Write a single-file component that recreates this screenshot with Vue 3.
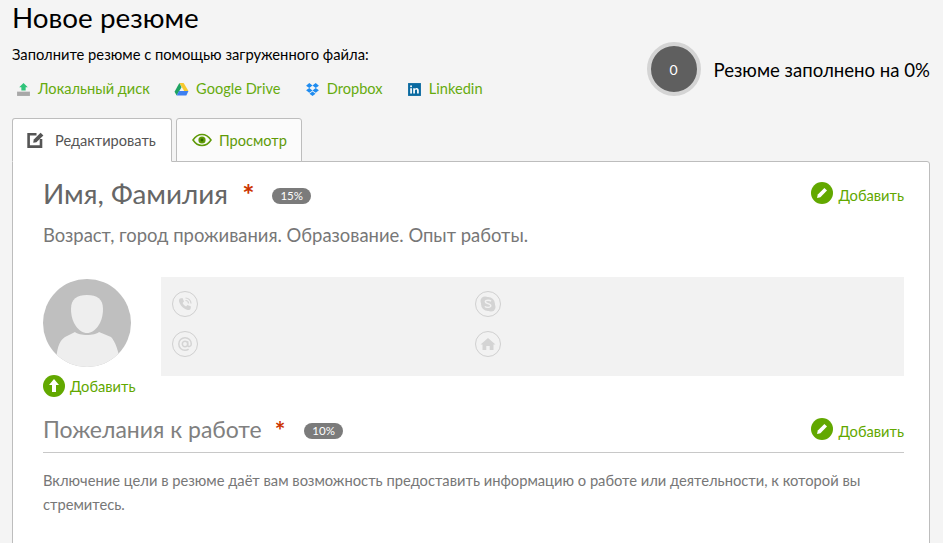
<script setup>
const sources = [
  { name: 'Локальный диск', icon: 'disk' },
  { name: 'Google Drive', icon: 'drive' },
  { name: 'Dropbox', icon: 'dropbox' },
  { name: 'Linkedin', icon: 'linkedin' }
]
</script>

<template>
  <div class="page">
    <header class="head">
      <div class="head-left">
        <h1 class="title">Новое резюме</h1>
        <p class="lead">Заполните резюме с помощью загруженного файла:</p>
        <div class="sources">
          <a v-for="s in sources" :key="s.name" class="source">
            <svg class="source-icon" width="15" height="15" viewBox="0 0 14 14">
              <template v-if="s.icon === 'disk'">
                <path d="M7 1 L11 5 H9 V8 H5 V5 H3 Z" fill="#2fc47a" />
                <rect x="1" y="9" width="12" height="4" fill="#a8a8a8" />
              </template>
              <template v-else-if="s.icon === 'drive'">
                <path d="M5 1 H9 L13.5 8.5 H9.5 Z" fill="#f7c92e" />
                <path d="M5 1 L0.5 9 L2.5 12.5 L7 5 Z" fill="#1ea362" />
                <path d="M2.5 12.5 H11.5 L13.5 8.5 H4.7 Z" fill="#3d7ff0" />
              </template>
              <template v-else-if="s.icon === 'dropbox'">
                <path d="M4 1 L7 3.2 L4 5.6 L1 3.4 Z M10 1 L13 3.4 L10 5.6 L7 3.2 Z M4 5.6 L7 7.9 L4 10 L1 7.8 Z M10 5.6 L13 7.8 L10 10 L7 7.9 Z M4.2 10.9 L7 8.9 L9.8 10.9 L7 13 Z" fill="#1f8cf0" />
              </template>
              <template v-else>
                <rect x="1" y="1" width="12" height="12" fill="#0a6aa0" />
                <rect x="3" y="5.8" width="1.6" height="5" fill="#fff" />
                <rect x="3" y="3.2" width="1.6" height="1.6" fill="#fff" />
                <path d="M5.8 5.8 H7.3 V6.6 C7.7 6 8.3 5.7 9 5.7 C10.3 5.7 11 6.5 11 8 V10.8 H9.4 V8.3 C9.4 7.5 9.1 7.1 8.5 7.1 C7.8 7.1 7.4 7.6 7.4 8.4 V10.8 H5.8 Z" fill="#fff" />
              </template>
            </svg>
            <span>{{ s.name }}</span>
          </a>
        </div>
      </div>
      <div class="progress">
        <div class="ring"><span>0</span></div>
        <span class="progress-text">Резюме заполнено на 0%</span>
      </div>
    </header>

    <nav class="tabs">
      <div class="tab tab-active">
        <svg width="18" height="18" viewBox="0 0 18 18" class="tab-icon">
          <path d="M9.5 3.2 H1.6 V15.6 H14 V8" fill="none" stroke="#555" stroke-width="2.6" />
          <path d="M6.2 11.8 L6.8 8.6 L13.6 1.8 L16.4 4.4 L9.4 11.2 Z" fill="#555" />
        </svg>
        <span>Редактировать</span>
      </div>
      <div class="tab tab-view">
        <svg width="20" height="14" viewBox="0 0 20 14" class="tab-icon">
          <path d="M1 7 C4 2.5 7 1.5 10 1.5 C13 1.5 16 2.5 19 7 C16 11.5 13 12.5 10 12.5 C7 12.5 4 11.5 1 7 Z" fill="none" stroke="#5f9a08" stroke-width="1.5" />
          <circle cx="10" cy="7" r="3.6" fill="#5f9a08" />
          <circle cx="10" cy="7" r="1.4" fill="#2f6a00" />
        </svg>
        <span>Просмотр</span>
      </div>
    </nav>

    <main class="panel">
      <section class="name-row">
        <h2 class="name">Имя, Фамилия</h2>
        <span class="star star-big">*</span>
        <span class="badge">15%</span>
        <a class="add add-right">
          <svg width="22" height="22" viewBox="0 0 22 22">
            <circle cx="11" cy="11" r="11" fill="#62a800" />
            <path d="M6 16 L6.8 12.6 L13.4 6 L16 8.6 L9.4 15.2 Z" fill="#fff" />
          </svg>
          <span>Добавить</span>
        </a>
      </section>
      <p class="sub">Возраст, город проживания. Образование. Опыт работы.</p>

      <section class="person">
        <div class="photo-col">
          <svg class="avatar" width="88" height="88" viewBox="0 0 88 88">
            <defs><clipPath id="av"><circle cx="44" cy="44" r="44" /></clipPath></defs>
            <circle cx="44" cy="44" r="44" fill="#bfbfbf" />
            <g clip-path="url(#av)">
              <path d="M13 88 C13 70 16 62 22 58 L32 53 C36 57 52 57 56 53 L68 58 C72 62 76 72 78 88 Z" fill="#eeeeee" />
              <path d="M28 30 C28 20 34 16 44 16 C54 16 60 20 60 30 C60 44 52 54 44 54 C36 54 28 44 28 30 Z" fill="#eeeeee" />
            </g>
          </svg>
          <a class="add add-photo">
            <svg width="22" height="22" viewBox="0 0 22 22">
              <circle cx="11" cy="11" r="11" fill="#62a800" />
              <path d="M11 4 L16 10 H13 V17 H9 V10 H6 Z" fill="#fff" />
            </svg>
            <span>Добавить</span>
          </a>
        </div>
        <div class="contacts">
          <span class="contact">
            <svg width="16" height="16" viewBox="0 0 16 16">
              <path d="M3 2.5 L5.5 2 L7 5.5 L5.6 7 C6.2 8.4 7.6 9.8 9 10.4 L10.5 9 L14 10.5 L13.5 13 C13 14 11.5 14.3 10 13.8 C6.5 12.7 3.3 9.5 2.2 6 C1.7 4.5 2 3 3 2.5 Z" fill="#d4d4d4" />
              <path d="M8.5 2 C11.5 2 14 4.5 14 7.5 M8.5 4.5 C10.2 4.5 11.5 5.8 11.5 7.5" fill="none" stroke="#d4d4d4" stroke-width="1.2" />
            </svg>
          </span>
          <span class="contact">
            <svg width="18" height="18" viewBox="0 0 18 18">
              <circle cx="6" cy="6" r="4.5" fill="#d4d4d4" />
              <circle cx="12" cy="12" r="4.5" fill="#d4d4d4" />
              <circle cx="9" cy="9" r="7" fill="#d4d4d4" />
              <path d="M12 6.3 C11 5 6.5 4.8 6.3 6.8 C6.1 8.9 11.9 8.4 11.8 10.8 C11.7 12.8 7 12.8 5.9 11.4" fill="none" stroke="#f2f2f2" stroke-width="1.4" />
            </svg>
          </span>
          <span class="contact">
            <svg width="16" height="16" viewBox="0 0 16 16">
              <circle cx="8" cy="8" r="2.7" fill="none" stroke="#d4d4d4" stroke-width="1.5" />
              <path d="M10.7 5.3 V9.3 C10.7 11.2 14.3 11 14.3 8 C14.3 4.5 11.5 1.8 8 1.8 C4.5 1.8 1.8 4.5 1.8 8 C1.8 11.5 4.5 14.2 8 14.2 C9.4 14.2 10.6 13.8 11.6 13.1" fill="none" stroke="#d4d4d4" stroke-width="1.5" />
            </svg>
          </span>
          <span class="contact">
            <svg width="16" height="16" viewBox="0 0 16 16">
              <path d="M8 2 L15.5 8.5 H13.5 V14 H9.7 V10 H6.3 V14 H2.5 V8.5 H0.5 Z" fill="#d4d4d4" />
            </svg>
          </span>
        </div>
      </section>

      <section class="wish-row">
        <h3 class="wish">Пожелания к работе</h3>
        <span class="star star-small">*</span>
        <span class="badge">10%</span>
        <a class="add add-right">
          <svg width="22" height="22" viewBox="0 0 22 22">
            <circle cx="11" cy="11" r="11" fill="#62a800" />
            <path d="M6 16 L6.8 12.6 L13.4 6 L16 8.6 L9.4 15.2 Z" fill="#fff" />
          </svg>
          <span>Добавить</span>
        </a>
      </section>
      <p class="wish-text">Включение цели в резюме даёт вам возможность предоставить информацию о работе или деятельности, к которой вы стремитесь.</p>
    </main>
  </div>
</template>

<style>
html, body { margin: 0; background: #f4f4f4; overflow: hidden; }
</style>

<style scoped>
.page {
  height: 543px;
  overflow: hidden;
  box-sizing: border-box;
  padding: 0 13px 0 12px;
  font-family: Lato, "Open Sans", sans-serif;
  background: #f4f4f4;
}
.head { display: flex; justify-content: space-between; height: 118px; }
.title { margin: 2px 0 0; font-size: 27.8px; line-height: 32px; font-weight: 400; color: #000; }
.lead { margin: 12px 0 0; font-size: 14.72px; line-height: 17px; color: #000; }
.sources { display: flex; gap: 24.3px; margin-top: 17px; padding-left: 4px; }
.source { display: flex; align-items: center; gap: 7px; font-size: 14.6px; line-height: 18px; color: #66ab0e; }
.progress { display: flex; align-items: flex-start; margin-top: 42px; gap: 13px; }
.ring {
  box-sizing: border-box; width: 54px; height: 54px; border-radius: 50%;
  background: #5f5f5f; border: 4.5px solid #d4d4d4;
  display: flex; align-items: center; justify-content: center;
  color: #fff; font-size: 14px;
}
.progress-text { font-size: 18.6px; line-height: 56px; color: #000; }
.tabs { display: flex; gap: 4px; height: 44px; margin-bottom: -1px; position: relative; z-index: 1; }
.tab {
  box-sizing: border-box; height: 44px;
  border: 1px solid #bdbdbd; border-radius: 3px 3px 0 0;
  display: flex; align-items: center; font-size: 14.6px;
}
.tab-active { width: 160px; background: #fff; border-bottom-color: #fff; color: #555; padding-left: 14px; gap: 10px; }
.tab-view { width: 126px; background: #fbfbfb; color: #5f9a08; padding-left: 15px; gap: 7px; }
.tab-icon { flex: none; }
.panel {
  box-sizing: border-box; height: 400px;
  background: #fff; border: 1px solid #bdbdbd; border-radius: 0 3px 0 0;
  padding: 0 25px 0 30px;
}
.name-row { display: flex; align-items: center; height: 61px; }
.name { margin: 0; font-size: 27.9px; font-weight: 400; color: #666; }
.star { color: #cc3300; line-height: 1; font-weight: 700; }
.star-big { font-size: 29px; margin-left: 14px; margin-top: 1px; }
.badge {
  background: #7b7b7b; color: #fff; font-size: 11.5px; line-height: 16px;
  padding: 0 8px; border-radius: 8px;
}
.name-row .badge { margin-left: 18px; margin-top: 7px; }
.add { display: flex; align-items: center; gap: 5px; font-size: 14.7px; color: #62a800; }
.add-right { margin-left: auto; }
.add-right span { padding-top: 4px; }
.sub { margin: 0; font-size: 18.45px; line-height: 24px; color: #777; }
.person { display: flex; margin-top: 30px; height: 129px; }
.photo-col { width: 118px; flex: none; padding-top: 2px; }
.avatar { display: block; }
.add-photo { margin-top: 8px; }
.contacts {
  flex: 1; background: #f2f2f2; height: 99px; box-sizing: border-box;
  display: grid; grid-template-columns: 303px 1fr; grid-auto-rows: 40px;
  padding: 14px 11px 0;
}
.contact {
  width: 26px; height: 26px; box-sizing: border-box;
  border: 1px solid #d0d0d0; border-radius: 50%;
  display: flex; align-items: center; justify-content: center;
}
.wish-row {
  display: flex; align-items: center; height: 46px;
  border-bottom: 1px solid #c8c8c8;
}
.wish { margin: 0; font-size: 23px; font-weight: 400; color: #808080; }
.star-small { font-size: 25px; margin-left: 13px; margin-top: 2px; }
.wish-row .badge { margin-left: 19px; margin-top: 3px; }
.wish-text { margin: 15px 0 0; font-size: 14.72px; line-height: 24px; color: #777; }
</style>
